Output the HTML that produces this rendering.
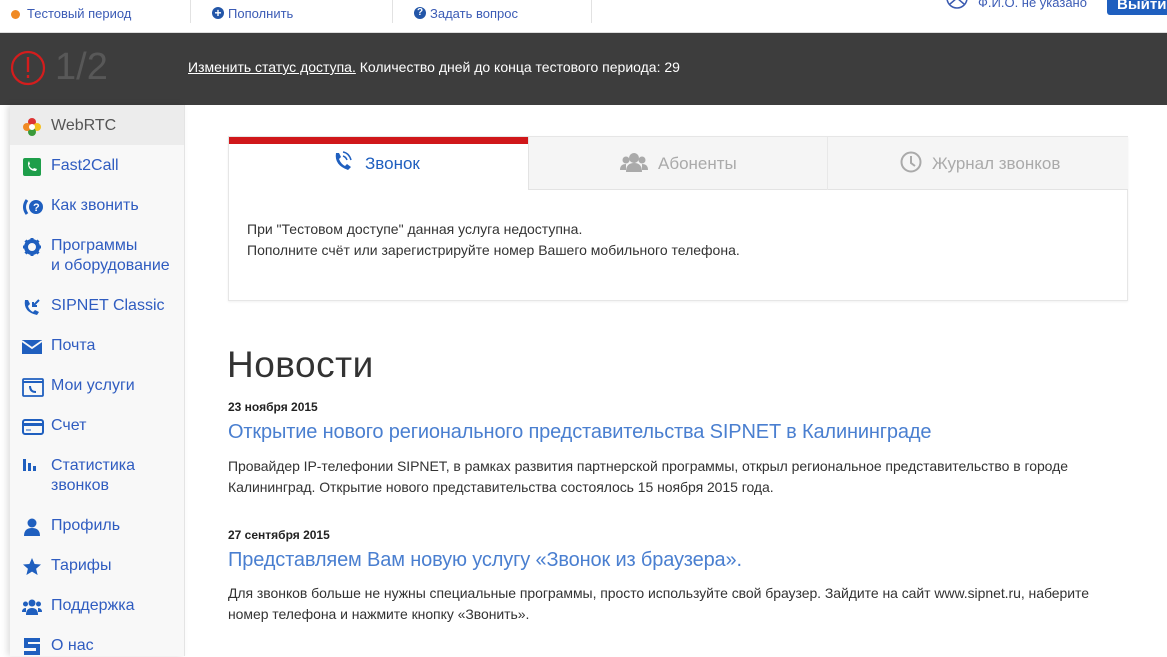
<!DOCTYPE html>
<html><head><meta charset="utf-8"><style>
*{margin:0;padding:0;box-sizing:border-box}
body{width:1167px;height:656px;overflow:hidden;background:#fff;font-family:"Liberation Sans",sans-serif;position:relative}
.a{position:absolute;white-space:nowrap}
.top{position:absolute;left:0;top:0;width:1167px;height:33px;border-bottom:1px solid #ddd;background:#fff}
.top .t{font-size:13px;color:#3b5bb5;top:6px}
.div{position:absolute;top:0;width:1px;height:23px;background:#e2e2e2}
.dark{position:absolute;left:0;top:33px;width:1167px;height:72px;background:#3d3d3d}
.side{position:absolute;left:10px;top:105px;width:175px;height:551px;background:#f8f8f8;border-right:1px solid #e4e4e4;box-shadow:-3px 0 6px rgba(0,0,0,.12)}
.it{position:absolute;left:0;width:175px;font-size:16px;color:#2f5cc0;line-height:20px}
.it span{position:absolute;left:41px}
.it svg{position:absolute;left:12px;top:1px}
.panel{position:absolute;left:228px;top:136px;width:900px;height:165px;border:1px solid #e6e6e6;box-shadow:0 1px 2px rgba(0,0,0,.06)}
.tab{position:absolute;top:0;height:53px;font-size:17px;line-height:53px;color:#aaa}
.n{font-size:14px;color:#333;letter-spacing:-0.05px}
.h{font-size:20px;color:#4a7fd0;letter-spacing:-0.15px}
.d{font-size:12px;font-weight:bold;color:#222}
</style></head><body>
<div class="top">
<div class="a" style="left:11px;top:10px;width:9px;height:9px;border-radius:50%;background:#f08a24"></div>
<div class="a t" style="left:27px">Тестовый период</div>
<div class="div" style="left:190px"></div>
<div class="a" style="left:212px;top:7px;width:12px;height:12px;border-radius:50%;background:#2356a8;color:#fff;font-size:12px;line-height:12px;text-align:center;font-weight:bold">+</div>
<div class="a t" style="left:228px">Пополнить</div>
<div class="div" style="left:392px"></div>
<div class="a" style="left:414px;top:7px;width:12px;height:12px;border-radius:50%;background:#2356a8;color:#fff;font-size:10px;line-height:12px;text-align:center;font-weight:bold">?</div>
<div class="a t" style="left:430px">Задать вопрос</div>
<div class="div" style="left:591px"></div>
<svg class="a" style="left:945px;top:-10px" width="24" height="22"><circle cx="12" cy="8" r="10" fill="none" stroke="#3a5ab0" stroke-width="1.5"/><path d="M5 14 L12 8 L19 14" fill="none" stroke="#3a5ab0" stroke-width="1.5"/></svg>
<div class="a" style="left:978px;top:-5px;font-size:13px;color:#3b5bb5">Ф.И.О. не указано</div>
<div class="a" style="left:1107px;top:-10px;width:70px;height:25px;background:#1f5fbf;border-radius:3px;color:#fff;font-weight:bold;font-size:15px;padding:6px 10px">Выйти</div>
</div>
<div class="dark">
<svg class="a" style="left:10px;top:17px" width="36" height="36"><circle cx="18" cy="18" r="16" fill="none" stroke="#d41d1d" stroke-width="2.2"/><rect x="16.8" y="7" width="2.4" height="15" fill="#d41d1d"/><rect x="16.8" y="25" width="2.4" height="3" fill="#d41d1d"/></svg>
<div class="a" style="left:55px;top:13px;font-size:38px;color:#585858">1/2</div>
<div class="a" style="left:188px;top:26px;font-size:14px;color:#fff"><u>Изменить статус доступа.</u> Количество дней до конца тестового периода: 29</div>
</div>
<div class="side">
<div class="a" style="left:0;top:0;width:174px;height:40px;background:#ececec"></div>
<div class="it" style="top:11px;color:#555"><svg width="20" height="20"><circle cx="10" cy="5" r="4" fill="#d33"/><circle cx="15" cy="10" r="4" fill="#f4c020"/><circle cx="10" cy="15" r="4" fill="#3a9a3a"/><circle cx="5" cy="10" r="4" fill="#f08a24"/><circle cx="10" cy="10" r="3" fill="#fff"/></svg><span>WebRTC</span></div>
<div class="it" style="top:51px"><svg width="20" height="20"><rect x="1" y="1" width="18" height="18" rx="2" fill="#1e9e4a"/><path d="M6 6 q0 8 8 8 l1-2 -3-1 -1 1 q-3-1-4-4 l1-1 -1-3z" fill="#fff"/></svg><span>Fast2Call</span></div>
<div class="it" style="top:91px"><svg width="22" height="20"><path d="M5 3 q-5 7 0 14" stroke="#1f5fbf" stroke-width="3" fill="none"/><circle cx="14" cy="10" r="7" fill="#1f5fbf"/><text x="11" y="14" font-size="11" font-weight="bold" fill="#fff" font-family="Liberation Sans">?</text></svg><span>Как звонить</span></div>
<div class="it" style="top:131px"><svg width="20" height="20"><circle cx="10" cy="10" r="6" fill="none" stroke="#1f5fbf" stroke-width="4"/><path d="M10 1v4M10 15v4M1 10h4M15 10h4M3.5 3.5l3 3M13.5 13.5l3 3M3.5 16.5l3-3M13.5 6.5l3-3" stroke="#1f5fbf" stroke-width="3"/></svg><span>Программы<br>и оборудование</span></div>
<div class="it" style="top:191px"><svg width="20" height="20"><path d="M3 3 q-2 12 12 15 l2-3 -4-2 -2 2 q-4-2-5-6 l2-2 -2-4z" fill="#1f5fbf"/><path d="M17 3 l-6 6 M11 5 v4 h4" stroke="#1f5fbf" stroke-width="2" fill="none"/></svg><span>SIPNET Classic</span></div>
<div class="it" style="top:231px"><svg width="20" height="20"><rect x="0" y="3" width="20" height="14" fill="#1f5fbf"/><path d="M0 4 l10 7 10-7" stroke="#f8f8f8" stroke-width="1.8" fill="none"/></svg><span>Почта</span></div>
<div class="it" style="top:271px"><svg width="22" height="20"><rect x="1" y="2" width="20" height="17" rx="1" fill="none" stroke="#1f5fbf" stroke-width="1.8"/><path d="M1 5 h20" stroke="#1f5fbf" stroke-width="2"/><path d="M8 9 q0 6 6 6" stroke="#1f5fbf" stroke-width="2" fill="none"/></svg><span>Мои услуги</span></div>
<div class="it" style="top:311px"><svg width="22" height="20"><rect x="1" y="3" width="20" height="14" rx="2" fill="none" stroke="#1f5fbf" stroke-width="2"/><rect x="1" y="6" width="20" height="3" fill="#1f5fbf"/><path d="M4 13h5" stroke="#1f5fbf"/></svg><span>Счет</span></div>
<div class="it" style="top:351px"><svg width="20" height="20"><rect x="1" y="2" width="3" height="12" fill="#1f5fbf"/><rect x="6" y="6" width="3" height="8" fill="#1f5fbf"/><rect x="11" y="9" width="3" height="5" fill="#1f5fbf"/></svg><span>Статистика<br>звонков</span></div>
<div class="it" style="top:411px"><svg width="20" height="20"><circle cx="10" cy="6" r="4.5" fill="#1f5fbf"/><path d="M2 19 q0-8 8-8 q8 0 8 8z" fill="#1f5fbf"/></svg><span>Профиль</span></div>
<div class="it" style="top:451px"><svg width="20" height="20"><path d="M10 1 l2.6 6 6.4.5-4.9 4.2 1.5 6.3L10 14.6 4.4 18l1.5-6.3L1 7.5l6.4-.5z" fill="#1f5fbf"/></svg><span>Тарифы</span></div>
<div class="it" style="top:491px"><svg width="20" height="20"><circle cx="10" cy="6" r="3.5" fill="#1f5fbf"/><circle cx="3.5" cy="7" r="2.5" fill="#1f5fbf"/><circle cx="16.5" cy="7" r="2.5" fill="#1f5fbf"/><path d="M4 18 q0-7 6-7 q6 0 6 7z M0 15 q0-4 4-4 l0 4z M20 15 q0-4-4-4 l0 4z" fill="#1f5fbf"/></svg><span>Поддержка</span></div>
<div class="it" style="top:531px"><svg width="20" height="20"><path d="M18 3 H4 v6 h12 v7 H2" stroke="#1f5fbf" stroke-width="4" fill="none"/></svg><span>О нас</span></div>
</div>
<div class="panel">
<div class="tab" style="left:299px;width:600px;background:#f5f5f5;border-bottom:1px solid #e3e3e3;border-left:1px solid #e3e3e3"></div>
<div class="a" style="left:598px;top:0;width:1px;height:53px;background:#e8e8e8"></div>
<div class="a" style="left:0;top:0;width:299px;height:7px;background:#d0171a"></div>
<div class="tab" style="left:104px;color:#1f5fbf"><svg style="vertical-align:-3px;margin-right:10px" width="22" height="22"><path d="M3 3 q-2 12 12 17 l3-3 -4-3 -2 2 q-4-2-6-7 l2-2 -2-4z" fill="#1f5fbf"/><path d="M10 2 q6 1 8 8 M10 6 q3 1 4 4" stroke="#1f5fbf" stroke-width="1.5" fill="none"/></svg>Звонок</div>
<div class="tab" style="left:391px"><svg style="vertical-align:-4px;margin-right:10px" width="28" height="22"><circle cx="14" cy="7" r="5" fill="#aaa"/><circle cx="6" cy="9" r="3.5" fill="#aaa"/><circle cx="22" cy="9" r="3.5" fill="#aaa"/><path d="M6 21 q0-9 8-9 q8 0 8 9z M0 19 q0-6 6-6 l0 6z M28 19 q0-6-6-6 l0 6z" fill="#aaa"/></svg>Абоненты</div>
<div class="tab" style="left:671px"><svg style="vertical-align:-4px;margin-right:10px" width="22" height="22"><circle cx="11" cy="11" r="9.5" fill="none" stroke="#aaa" stroke-width="2"/><path d="M11 5 v7 l4 3" stroke="#aaa" stroke-width="2" fill="none"/></svg>Журнал звонков</div>
<div class="a" style="left:18px;top:82px;font-size:14px;color:#333;line-height:21px">При "Тестовом доступе" данная услуга недоступна.<br>Пополните счёт или зарегистрируйте номер Вашего мобильного телефона.</div>
</div>
<div class="a" style="left:227px;top:344px;font-size:37px;color:#333;letter-spacing:0.5px">Новости</div>
<div class="a d" style="left:228px;top:400px">23 ноября 2015</div>
<div class="a h" style="left:228px;top:421px">Открытие нового регионального представительства SIPNET в Калининграде</div>
<div class="a n" style="left:228px;top:456px;line-height:21px">Провайдер IP-телефонии SIPNET, в рамках развития партнерской программы, открыл региональное представительство в городе<br>Калининград. Открытие нового представительства состоялось 15 ноября 2015 года.</div>
<div class="a d" style="left:228px;top:528px">27 сентября 2015</div>
<div class="a h" style="left:228px;top:549px">Представляем Вам новую услугу «Звонок из браузера».</div>
<div class="a n" style="left:228px;top:583px;line-height:21px">Для звонков больше не нужны специальные программы, просто используйте свой браузер. Зайдите на сайт www.sipnet.ru, наберите<br>номер телефона и нажмите кнопку «Звонить».</div>
</body></html>
